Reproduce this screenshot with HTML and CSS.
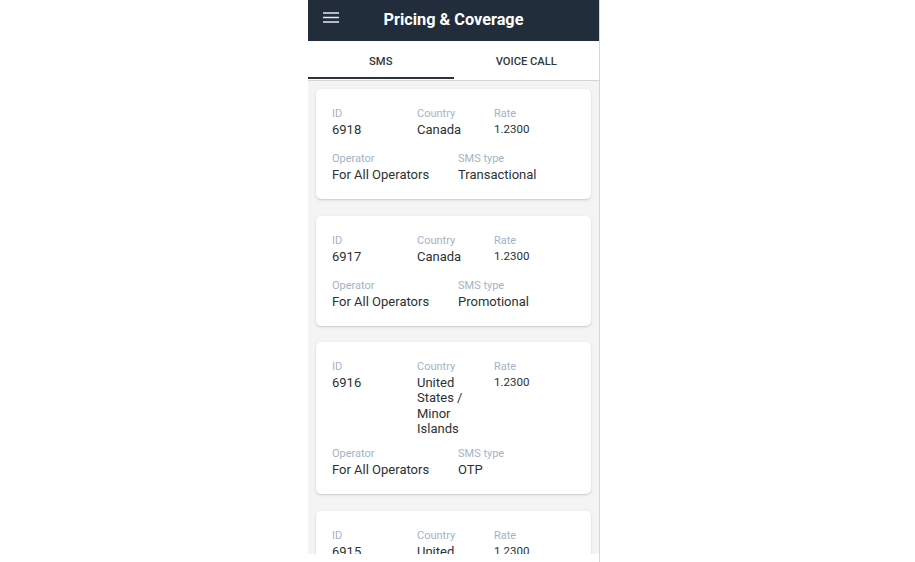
FILE: index.html
```html
<!DOCTYPE html>
<html lang="en">
<head>
<meta charset="utf-8">
<title>Pricing &amp; Coverage</title>
<link rel="stylesheet" href="styles.css">
</head>
<body>
<div class="app">
  <header class="topbar">
    <div class="menu">
      <svg width="16" height="11" viewBox="0 0 16 11"><path d="M0 1h16M0 5.5h16M0 10h16" stroke="#e4e9ee" stroke-width="1.7" fill="none"/></svg>
    </div>
    <h1 class="title">Pricing &amp; Coverage</h1>
    <div></div>
  </header>
  <nav class="tabs">
    <div class="tab active">SMS</div>
    <div class="tab">VOICE CALL</div>
  </nav>
  <main class="list">
    <section class="card">
      <div class="row row3">
        <div class="field"><div class="label">ID</div><div class="value">6918</div></div>
        <div class="field"><div class="label">Country</div><div class="value">Canada</div></div>
        <div class="field"><div class="label">Rate</div><div class="value rate">1.2300</div></div>
      </div>
      <div class="row row2">
        <div class="field"><div class="label">Operator</div><div class="value">For All Operators</div></div>
        <div class="field"><div class="label">SMS type</div><div class="value">Transactional</div></div>
      </div>
    </section>
    <section class="card">
      <div class="row row3">
        <div class="field"><div class="label">ID</div><div class="value">6917</div></div>
        <div class="field"><div class="label">Country</div><div class="value">Canada</div></div>
        <div class="field"><div class="label">Rate</div><div class="value rate">1.2300</div></div>
      </div>
      <div class="row row2">
        <div class="field"><div class="label">Operator</div><div class="value">For All Operators</div></div>
        <div class="field"><div class="label">SMS type</div><div class="value">Promotional</div></div>
      </div>
    </section>
    <section class="card">
      <div class="row row3">
        <div class="field"><div class="label">ID</div><div class="value">6916</div></div>
        <div class="field"><div class="label">Country</div><div class="value">United States / Minor Islands</div></div>
        <div class="field"><div class="label">Rate</div><div class="value rate">1.2300</div></div>
      </div>
      <div class="row row2">
        <div class="field"><div class="label">Operator</div><div class="value">For All Operators</div></div>
        <div class="field"><div class="label">SMS type</div><div class="value">OTP</div></div>
      </div>
    </section>
    <section class="card">
      <div class="row row3">
        <div class="field"><div class="label">ID</div><div class="value">6915</div></div>
        <div class="field"><div class="label">Country</div><div class="value">United States / Minor Islands</div></div>
        <div class="field"><div class="label">Rate</div><div class="value rate">1.2300</div></div>
      </div>
      <div class="row row2">
        <div class="field"><div class="label">Operator</div><div class="value">For All Operators</div></div>
        <div class="field"><div class="label">SMS type</div><div class="value">OTP</div></div>
      </div>
    </section>
  </main>
</div>
</body>
</html>
```
FILE: styles.css
```css
* { box-sizing: border-box; }
html, body { margin: 0; padding: 0; background: #ffffff; }
body {
  font-family: Roboto, "Liberation Sans", Arial, sans-serif;
  width: 915px;
  height: 562px;
  overflow: hidden;
}
.app {
  margin-left: 308px;
  width: 292px;
  height: 562px;
  border-right: 1px solid #d4d6d8;
  background: #ffffff;
  display: flex;
  flex-direction: column;
}
.topbar {
  height: 41px;
  background: #212d3b;
  display: grid;
  grid-template-columns: 1fr auto 1fr;
  align-items: center;
}
.menu {
  padding-left: 15px;
  align-self: start;
  padding-top: 12px;
  line-height: 0;
}
.title {
  margin: 0;
  color: #ffffff;
  font-size: 16.3px;
  font-weight: 700;
  line-height: 20px;
  margin-top: -2px;
}
.tabs {
  display: grid;
  grid-template-columns: 1fr 1fr;
  background: #ffffff;
  padding-bottom: 1px;
  border-bottom: 1px solid #d3d5d7;
}
.tab {
  height: 38px;
  padding-top: 4px;
  border-bottom: 2.5px solid transparent;
  display: flex;
  align-items: center;
  justify-content: center;
  font-size: 11.2px;
  font-weight: 500;
  color: #33373c;
  text-transform: uppercase;
}
.tab.active { border-bottom-color: #28323f; }
.list {
  height: 473px;
  overflow: hidden;
  background: #f4f4f4;
  padding: 8px 8px 0 8px;
  display: flex;
  flex-direction: column;
  gap: 16.5px;
}
.card {
  flex: none;
  background: #ffffff;
  border-radius: 5px;
  box-shadow: 0 1px 3px rgba(0, 0, 0, 0.13), 0 1px 1px rgba(0, 0, 0, 0.06);
  padding: 17px 16px 13px 16px;
}
.row { display: grid; column-gap: 7px; }
.row3 { grid-template-columns: 78px 70px 1fr; }
.row2 { grid-template-columns: 119px 1fr; margin-top: 10px; }
.label {
  font-size: 11px;
  line-height: 16px;
  color: #a3b3c5;
}
.value {
  font-size: 13px;
  line-height: 15.3px;
  min-height: 19px;
  color: #2c3136;
}
.value.rate { font-size: 11.5px; }
```
